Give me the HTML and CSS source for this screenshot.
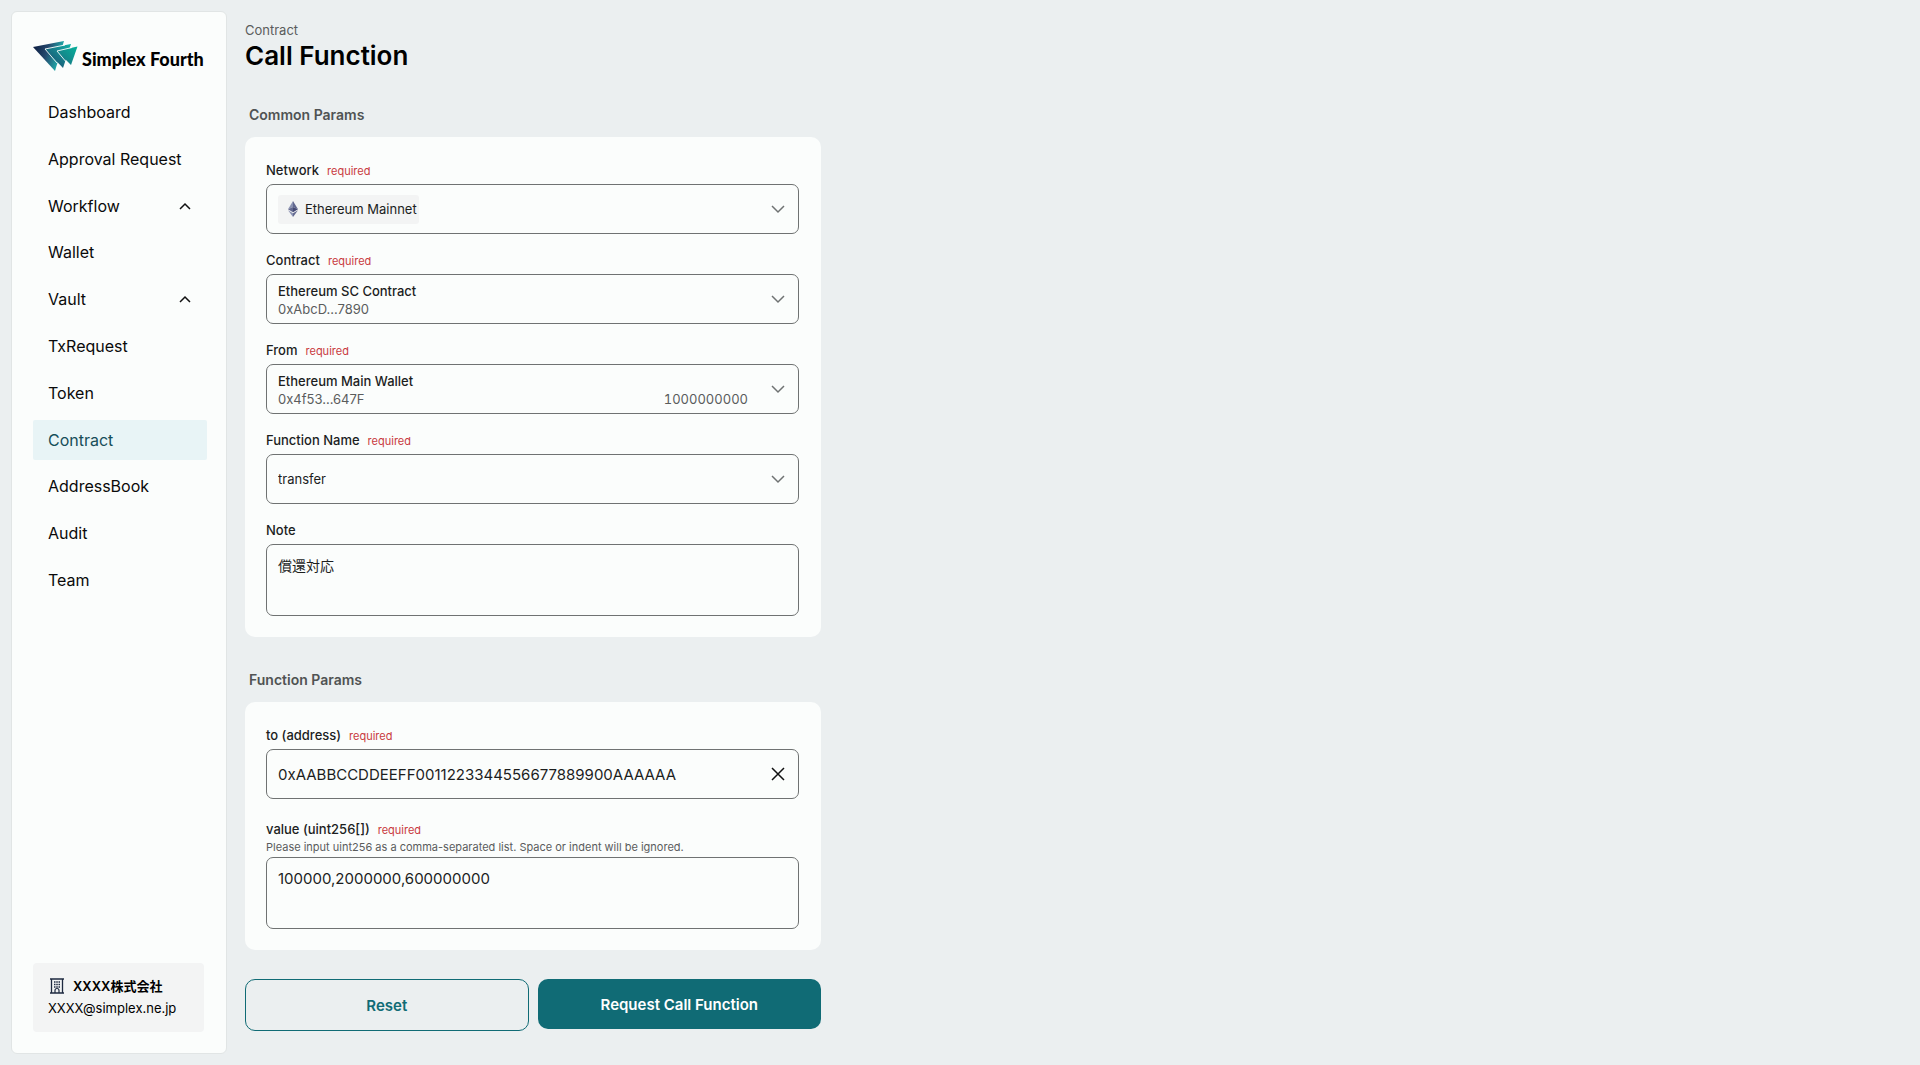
FILE: index.html
```html
<!DOCTYPE html>
<html lang="en">
<head>
    <meta charset="UTF-8">
    <meta name="viewport" content="width=device-width, initial-scale=1.0">
    <title>Call Function | Simplex Fourth</title>
    <link rel="stylesheet" href="styles.css">
</head>
<body>
    <aside class="sidebar">
        <a class="logo" href="#">
            <svg class="logo-mark" viewBox="0 0 45 30" aria-hidden="true">
                <defs>
                    <linearGradient id="logoDark" x1="0" y1="0" x2="1" y2="0.3">
                        <stop offset="0" stop-color="#08163a"/>
                        <stop offset="0.5" stop-color="#24486d"/>
                        <stop offset="1" stop-color="#1fb5b0"/>
                    </linearGradient>
                    <linearGradient id="logoMid" x1="0" y1="1" x2="1" y2="0">
                        <stop offset="0" stop-color="#1c3c66"/>
                        <stop offset="1" stop-color="#12b3a8"/>
                    </linearGradient>
                    <linearGradient id="logoLight" x1="0" y1="1" x2="1" y2="0">
                        <stop offset="0" stop-color="#1d6c80"/>
                        <stop offset="1" stop-color="#06b29b"/>
                    </linearGradient>
                </defs>
                <path d="M0 6 L31 0 L22 30 Z" fill="url(#logoDark)"/>
                <path d="M12 8 L38 3 L30 27 Z" fill="url(#logoMid)"/>
                <path d="M24 10 L44.500 5.500 L38 24 Z" fill="url(#logoLight)"/>
                <path d="M32 4 L12 8 L24 22 M39 6.500 L24 10 L34 22" fill="none" stroke="#fbfdfc" stroke-width="0.9"/>
            </svg>
            <span class="logo-text">Simplex Fourth</span>
        </a>

        <nav class="nav">
            <a class="nav-item" href="#">Dashboard</a>
            <a class="nav-item" href="#">Approval Request</a>
            <button class="nav-item" type="button" aria-expanded="false">Workflow
                <svg class="nav-arrow" viewBox="0 0 12 12" aria-hidden="true"><path d="M1 9 L6 4 L11 9"/></svg>
            </button>
            <a class="nav-item" href="#">Wallet</a>
            <button class="nav-item" type="button" aria-expanded="false">Vault
                <svg class="nav-arrow" viewBox="0 0 12 12" aria-hidden="true"><path d="M1 9 L6 4 L11 9"/></svg>
            </button>
            <a class="nav-item" href="#">TxRequest</a>
            <a class="nav-item" href="#">Token</a>
            <a class="nav-item active" href="#" aria-current="page">Contract</a>
            <a class="nav-item" href="#">AddressBook</a>
            <a class="nav-item" href="#">Audit</a>
            <a class="nav-item" href="#">Team</a>
        </nav>

        <div class="account">
            <div class="account-name">
                <svg class="account-icon" viewBox="0 0 16 16" aria-hidden="true">
                    <path d="M2.500 1 V15 M13.500 1 V15 M1 1 H15 M1 15 H15" fill="none" stroke="#1f2a40" stroke-width="1.300"/>
                    <path d="M6 15 V12.500 A2 2 0 0 1 10 12.500 V15" fill="none" stroke="#1f2a40" stroke-width="1.200"/>
                    <path d="M5 4 H11 M5 6.500 H11 M5 9 H11" fill="none" stroke="#1f2a40" stroke-width="1.300" stroke-dasharray="1.500 0.750"/>
                </svg>
                <span>XXXX株式会社</span>
            </div>
            <div class="account-mail">XXXX@simplex.ne.jp</div>
        </div>
    </aside>

    <main class="content">
        <div class="breadcrumb">Contract</div>
        <h1>Call Function</h1>

        <form class="call-form">
            <h2>Common Params</h2>
            <section class="card">
                <div class="field">
                    <div class="field-label"><label for="network">Network</label><span class="required">required</span></div>
                    <div class="select-box chip-select">
                        <span class="chip" aria-hidden="true">
                            <svg class="eth-icon" viewBox="0 0 10 16">
                                <path d="M5 0 L0 8.200 L5 6 Z" fill="#8a92b2"/>
                                <path d="M5 0 L10 8.200 L5 6 Z" fill="#62688f"/>
                                <path d="M5 6 L0 8.200 L5 11.200 Z" fill="#62688f"/>
                                <path d="M5 6 L10 8.200 L5 11.200 Z" fill="#454a75"/>
                                <path d="M0 9.300 L5 16 V12.200 Z" fill="#8a92b2"/>
                                <path d="M10 9.300 L5 16 V12.200 Z" fill="#62688f"/>
                            </svg>
                        </span>
                        <select id="network">
                            <option>Ethereum Mainnet</option>
                        </select>
                        <svg class="arrow" viewBox="0 0 14 14" aria-hidden="true"><path d="M1 4 L7 10 L13 4"/></svg>
                    </div>
                </div>

                <div class="field">
                    <div class="field-label"><label for="contract">Contract</label><span class="required">required</span></div>
                    <div class="select-box two-line">
                        <select id="contract">
                            <option>Ethereum SC Contract</option>
                        </select>
                        <div class="sub-line"><span>0xAbcD...7890</span></div>
                        <svg class="arrow" viewBox="0 0 14 14" aria-hidden="true"><path d="M1 4 L7 10 L13 4"/></svg>
                    </div>
                </div>

                <div class="field">
                    <div class="field-label"><label for="from">From</label><span class="required">required</span></div>
                    <div class="select-box two-line">
                        <select id="from">
                            <option>Ethereum Main Wallet</option>
                        </select>
                        <div class="sub-line"><span>0x4f53...647F</span><span class="balance">1000000000</span></div>
                        <svg class="arrow" viewBox="0 0 14 14" aria-hidden="true"><path d="M1 4 L7 10 L13 4"/></svg>
                    </div>
                </div>

                <div class="field">
                    <div class="field-label"><label for="functionName">Function Name</label><span class="required">required</span></div>
                    <div class="select-box">
                        <select id="functionName">
                            <option>transfer</option>
                        </select>
                        <svg class="arrow" viewBox="0 0 14 14" aria-hidden="true"><path d="M1 4 L7 10 L13 4"/></svg>
                    </div>
                </div>

                <div class="field">
                    <div class="field-label"><label for="note">Note</label></div>
                    <textarea id="note" lang="ja">償還対応</textarea>
                </div>
            </section>

            <h2>Function Params</h2>
            <section class="card function-card">
                <div class="field">
                    <div class="field-label"><label for="to">to (address)</label><span class="required">required</span></div>
                    <div class="input-box">
                        <input type="text" id="to" value="0xAABBCCDDEEFF0011223344556677889900AAAAAA">
                        <button class="clear" type="button" aria-label="Clear">
                            <svg viewBox="0 0 14 14" aria-hidden="true"><path d="M1 1 L13 13 M13 1 L1 13"/></svg>
                        </button>
                    </div>
                </div>

                <div class="field">
                    <div class="field-label with-help"><label for="value">value (uint256[])</label><span class="required">required</span></div>
                    <p class="help" id="valueHelp">Please input uint256 as a comma-separated list. Space or indent will be ignored.</p>
                    <textarea id="value" class="value-text" aria-describedby="valueHelp">100000,2000000,600000000</textarea>
                </div>
            </section>

            <div class="actions">
                <button class="reset" type="button">Reset</button>
                <button class="submit" type="button">Request Call Function</button>
            </div>
        </form>
    </main>
</body>
</html>
```
FILE: styles.css
```css
* {
    box-sizing: border-box;
}
body {
    margin: 0;
    min-height: 100vh;
    padding: 11px;
    display: flex;
    gap: 18px;
    background-color: #ebeff0;
    color: #1c1e1e;
    font-family: Inter, "Noto Sans CJK JP", sans-serif;
    font-size: 13px;
}
button, input, select, textarea {
    font-family: inherit;
    font-size: inherit;
    color: inherit;
    margin: 0;
}

/* Sidebar */
.sidebar {
    width: 216px;
    flex-shrink: 0;
    display: flex;
    flex-direction: column;
    padding: 29px 19px 21px 21px;
    background-color: #fbfdfc;
    border: 1px solid #e1e5e5;
    border-radius: 6px;
}
.logo {
    display: flex;
    gap: 4px;
    height: 31px;
    color: #000;
    text-decoration: none;
}
.logo-mark {
    width: 45px;
    height: 30px;
}
.logo-text {
    font-family: Lato, sans-serif;
    font-size: 18px;
    font-weight: 900;
    line-height: 37px;
    white-space: nowrap;
}
.nav {
    display: flex;
    flex-direction: column;
    justify-content: space-between;
    min-height: 508px;
    margin-top: 20px;
}
.nav-item {
    display: flex;
    align-items: center;
    justify-content: space-between;
    height: 40px;
    padding: 0 16px 0 15px;
    border: none;
    border-radius: 2px;
    background: none;
    color: #0a0a0a;
    font-size: 16px;
    text-align: left;
    text-decoration: none;
    cursor: pointer;
}
.nav-item.active {
    background-color: #e8f4f6;
    color: #174e59;
}
.nav-arrow {
    width: 12px;
    height: 12px;
    fill: none;
    stroke: #111;
    stroke-width: 1.5;
}
.account {
    margin: auto 3px 0 0;
    padding: 13px 15px;
    height: 69px;
    background-color: #f3f4f4;
    border-radius: 4px;
    color: #000;
}
.account-name {
    display: flex;
    align-items: center;
    gap: 8px;
    height: 20px;
    line-height: 20px;
    padding-left: 1px;
    font-weight: 600;
}
.account-icon {
    width: 16px;
    height: 16px;
}
.account-mail {
    line-height: 24px;
}

/* Main content */
.content {
    flex: 1;
    padding-top: 9px;
}
.breadcrumb {
    color: #5a5c5c;
    line-height: 20px;
}
h1 {
    margin: 0 0 33px;
    color: #000;
    font-size: 26px;
    font-weight: 600;
    line-height: 32px;
}
.call-form {
    max-width: 576px;
}
h2 {
    margin: 0 0 12px;
    padding-left: 4px;
    color: #505353;
    font-size: 14px;
    font-weight: 600;
    line-height: 20px;
}
.card {
    display: flex;
    flex-direction: column;
    gap: 16px;
    margin-bottom: 33px;
    padding: 23px 22px 21px 21px;
    background-color: #fbfdfc;
    border-radius: 10px;
}
.function-card {
    gap: 20px;
    margin-bottom: 29px;
}
.field-label {
    display: flex;
    align-items: baseline;
    gap: 8px;
    height: 20px;
    margin-bottom: 4px;
    line-height: 20px;
    font-weight: 500;
}
.field-label.with-help {
    margin-bottom: 0;
}
.required {
    color: #c93a40;
    font-size: 11px;
    font-weight: 400;
}
.help {
    margin: 0 0 2px;
    color: #5a5c5c;
    font-size: 11px;
    line-height: 16px;
}

/* Select with its arrow and extra lines stacked in one grid cell */
.select-box, .input-box {
    display: grid;
    align-items: center;
}
.select-box > *, .input-box > * {
    grid-area: 1 / 1;
}
select, input, textarea {
    width: 100%;
    height: 50px;
    padding: 0 12px 0 11px;
    border: 1px solid #6f7272;
    border-radius: 7px;
    background: transparent;
    outline: none;
}
select {
    appearance: none;
    cursor: pointer;
}
.arrow {
    justify-self: end;
    width: 14px;
    height: 14px;
    margin-right: 14px;
    fill: none;
    stroke: #6f7272;
    stroke-width: 1.5;
    pointer-events: none;
}
.chip {
    display: flex;
    align-items: center;
    width: 141px;
    height: 29px;
    margin-left: 12px;
    padding-left: 10px;
    background-color: #f3f4f4;
    border-radius: 3px;
}
.eth-icon {
    width: 10px;
    height: 16px;
}
.chip-select select {
    padding-left: 38px;
}
.two-line select {
    padding-bottom: 17px;
    font-weight: 500;
}
.sub-line {
    align-self: end;
    display: flex;
    justify-content: space-between;
    margin: 0 51px 6px 12px;
    color: #5a5c5c;
    line-height: 18px;
    pointer-events: none;
}
.balance {
    font-variant-numeric: tabular-nums;
}
input, .value-text {
    font-size: 15px;
}
input {
    padding-right: 50px;
}
.clear {
    justify-self: end;
    display: flex;
    margin-right: 14px;
    padding: 0;
    border: none;
    background: none;
    cursor: pointer;
}
.clear svg {
    width: 14px;
    height: 14px;
    fill: none;
    stroke: #111;
    stroke-width: 1.5;
}
textarea {
    display: block;
    height: 72px;
    padding-top: 11px;
    font-size: 14px;
    line-height: 20px;
    resize: none;
}

/* Buttons */
.actions {
    display: grid;
    grid-template-columns: 1fr 1fr;
    align-items: start;
    gap: 9px;
}
.actions button {
    height: 50px;
    border: none;
    border-radius: 10px;
    font-size: 15px;
    font-weight: 600;
    cursor: pointer;
}
.actions .reset {
    height: 52px;
    border: 1px solid #106b75;
    background: transparent;
    color: #106b75;
}
.actions .submit {
    background-color: #106b75;
    color: #fff;
}
```
